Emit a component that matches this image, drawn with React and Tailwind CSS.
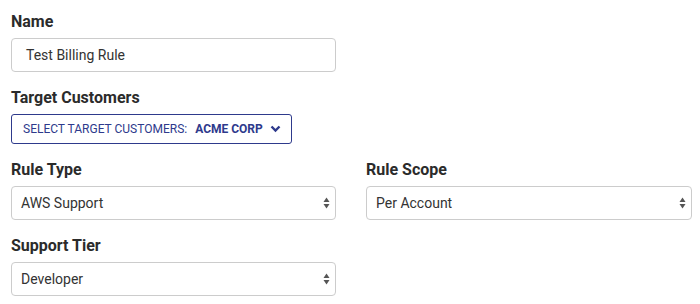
import React from 'react';

function Label({ children }) {
  return <div className="text-[16px] leading-[20px] font-bold text-[#2b2b2b] mb-[6px]">{children}</div>;
}

function SelectBox({ value }) {
  return (
    <div className="h-[34px] w-full border border-[#cccccc] rounded-[4px] bg-white flex items-center justify-between pl-[9px] pr-[5px]">
      <span className="text-[14px] text-[#333333]">{value}</span>
      <svg width="7" height="12" viewBox="0 0 7 12" className="text-[#555555]">
        <path d="M3.5 0.5 L6.5 5 L0.5 5 Z" fill="currentColor" />
        <path d="M3.5 11.5 L6.5 7 L0.5 7 Z" fill="currentColor" />
      </svg>
    </div>
  );
}

export default function App() {
  return (
    <div className="w-[700px] h-[304px] bg-white pt-[12px] pl-[11px]" style={{ fontFamily: 'Roboto, "Liberation Sans", sans-serif' }}>
      <div className="mb-[16px] w-[325px]">
        <Label>Name</Label>
        <div className="h-[34px] border border-[#cccccc] rounded-[4px] flex items-center pl-[14px]">
          <span className="text-[14px] text-[#333333]">Test Billing Rule</span>
        </div>
      </div>

      <div className="mb-[16px]">
        <Label>Target Customers</Label>
        <button className="h-[30px] w-[281px] border border-[#2e3a8c] rounded-[3px] flex items-center pl-[11px] text-[12px] text-[#2e3a8c] uppercase">
          <span>Select target customers:</span>
          <span className="font-bold ml-[8px]">Acme Corp</span>
          <svg width="11" height="8" viewBox="0 0 11 8" className="ml-[7px]">
            <path d="M1.5 1.5 L5.5 5.5 L9.5 1.5" stroke="#2e3a8c" strokeWidth="2.4" fill="none" />
          </svg>
        </button>
      </div>

      <div className="grid grid-cols-[325px_326px] gap-x-[30px] gap-y-[16px]">
        <div>
          <Label>Rule Type</Label>
          <SelectBox value="AWS Support" />
        </div>
        <div>
          <Label>Rule Scope</Label>
          <SelectBox value="Per Account" />
        </div>
        <div>
          <Label>Support Tier</Label>
          <SelectBox value="Developer" />
        </div>
      </div>
    </div>
  );
}
